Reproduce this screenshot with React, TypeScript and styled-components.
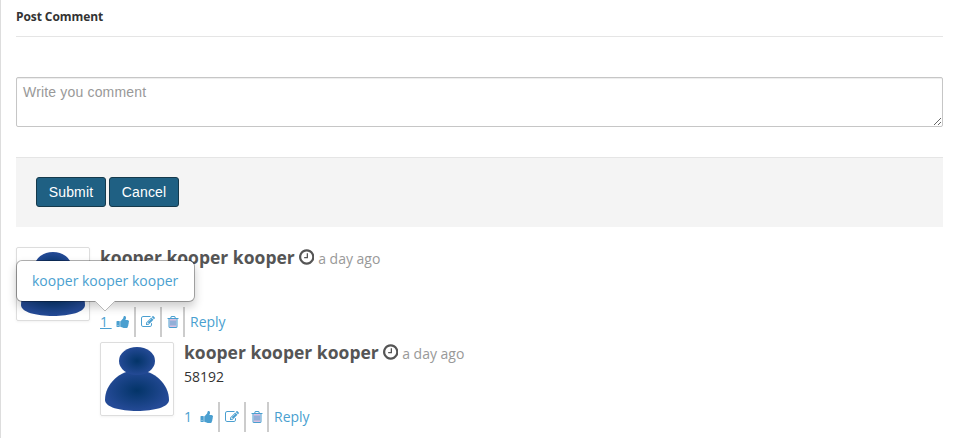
import React from "react";
import styled, { createGlobalStyle } from "styled-components";

const GlobalStyle = createGlobalStyle`
  * { box-sizing: border-box; }
  html, body { margin: 0; background: #fff; overflow: hidden; }
  body { font: 14px/20px "Open Sans", sans-serif; color: #333; }
`;

const Page = styled.main`
  height: 438px;
  padding: 0 12px 0 15px;
  border-left: 1px solid #ddd;
  overflow: hidden;
`;

const Legend = styled.h2`
  height: 37px;
  margin: 0 0 40px;
  padding-top: 7px;
  border-bottom: 1px solid #e5e5e5;
  font-size: 12px;
  line-height: 20px;
  font-weight: 700;
  letter-spacing: -0.08px;
`;

const CommentBox = styled.textarea`
  display: block;
  width: 100%;
  height: 50px;
  margin: 0 0 30px;
  padding: 4px 6px;
  border: 1px solid #c6c6c6;
  border-radius: 2px;
  box-shadow: inset 0 1px 1px rgba(0, 0, 0, 0.075);
  background: #fff;
  font: 14px/20px "Liberation Sans", Arial, sans-serif;
  letter-spacing: 0.17px;
  resize: vertical;
  overflow: auto;
  outline: 0;
  &::placeholder { color: #999; }
`;

const FormActions = styled.div`
  display: flex;
  gap: 3px;
  height: 70px;
  padding: 19px 20px;
  margin-bottom: 20px;
  border-top: 1px solid #e5e5e5;
  background: #f4f4f4;
`;

const Button = styled.button`
  width: 70px;
  height: 30px;
  padding: 0;
  border: 1px solid #15394b;
  border-radius: 3px;
  background: #1f6083;
  color: #fff;
  font: 14px/20px "Liberation Sans", Arial, sans-serif;
  letter-spacing: 0.12px;
`;

const CommentRow = styled.article<{ $nested?: boolean }>`
  display: flex;
  gap: 10px;
  height: 95px;
  margin-left: ${(p) => (p.$nested ? "84px" : "0")};
`;

const Avatar = styled.div`
  flex: none;
  width: 74px;
  height: 74px;
  padding: 4px;
  border: 1px solid #ddd;
  border-radius: 2px;
  box-shadow: 0 1px 3px rgba(0, 0, 0, 0.055);
  svg { display: block; }
`;

const CommentBody = styled.div`
  display: flex;
  flex-direction: column;
`;

const Heading = styled.h4`
  display: flex;
  align-items: baseline;
  height: 20px;
  margin: 0 0 5px;
  color: #555;
  font-size: 17.5px;
  line-height: 20px;
  font-weight: 700;
  white-space: pre;
  svg { margin: 1px 4px 0; align-self: flex-start; }
`;

const Time = styled.small`
  color: #999;
  font-size: 14px;
  font-weight: 400;
`;

const Message = styled.p`
  height: 20px;
  margin: 0 0 15px;
`;

const Actions = styled.div`
  display: flex;
  height: 30px;
  line-height: 30px;
  color: #4a9fd0;
`;

const Action = styled.span<{ $width: number; $pad?: number }>`
  display: flex;
  align-items: center;
  width: ${(p) => p.$width}px;
  padding-left: ${(p) => p.$pad ?? 5}px;
  border-right: 2px solid #ccc;
`;

const Count = styled.a<{ $underlined?: boolean }>`
  width: 16px;
  white-space: pre;
  color: #4a9fd0;
  text-decoration: ${(p) => (p.$underlined ? "underline" : "none")};
`;

const Reply = styled.a`
  padding-left: 5px;
  color: #4a9fd0;
`;

const PopoverAnchor = styled.div`
  position: relative;
  height: 0;
`;

const Popover = styled.div`
  position: absolute;
  z-index: 2;
  left: 0;
  top: 13px;
  width: 179px;
  height: 42px;
  padding: 10px 15px;
  border: 1px solid rgba(0, 0, 0, 0.3);
  background-clip: padding-box;
  border-radius: 6px;
  background-color: #fff;
  box-shadow: 0 5px 10px rgba(0, 0, 0, 0.2);
  color: #4a9fd0;
  white-space: nowrap;
`;

const PopoverArrow = styled.svg`
  position: absolute;
  left: 77px;
  top: 40px;
`;

const GLYPHS = {
  clock: {
    width: 1536,
    d: "M896 544v448q0 14-9 23t-23 9h-320q-14 0-23-9t-9-23v-64q0-14 9-23t23-9h224v-352q0-14 9-23t23-9h64q14 0 23 9t9 23zm416 352q0-148-73-273t-198-198-273-73-273 73-198 198-73 273 73 273 198 198 273 73 273-73 198-198 73-273zm224 0q0 209-103 385.5t-279.5 279.5-385.5 103-385.5-103-279.5-279.5-103-385.5 103-385.5 279.5-279.5 385.5-103 385.5 103 279.5 279.5 103 385.5z",
  },
  thumb: {
    width: 1792,
    d: "M320 1344q0-26-19-45t-45-19q-27 0-45.5 19t-18.5 45q0 27 18.5 45.5t45.5 18.5q26 0 45-18.5t19-45.5zm160-512v640q0 26-19 45t-45 19h-288q-26 0-45-19t-19-45v-640q0-26 19-45t45-19h288q26 0 45 19t19 45zm1184 0q0 86-55 149 15 44 15 76 3 76-43 137 17 56 0 117-15 57-54 94 9 112-49 181-64 76-197 78h-129q-66 0-144-15.5t-121.5-29-120.5-39.5q-123-43-158-44-26-1-45-19.5t-19-44.5v-641q0-25 18-43.5t43-20.5q24-2 76-59t101-121q68-87 101-120 18-18 31-48t17.5-48.5 13.5-60.5q7-39 12.5-61t19.5-52 34-50q19-19 45-19 46 0 82.5 10.5t60 26 40 40.5 24 45 12 50 5 45 .5 39q0 38-9.5 76t-19 60-27.5 56q-3 6-10 18t-11 22-8 24h277q78 0 135 57t57 135z",
  },
  edit: {
    width: 1792,
    d: "M888 1184l116-116-152-152-116 116v56h96v96h56zm440-720q-16-16-33 1l-350 350q-17 17-1 33t33-1l350-350q17-17 1-33zm80 594v190q0 119-84.5 203.5t-203.5 84.5h-832q-119 0-203.5-84.5t-84.5-203.5v-832q0-119 84.5-203.5t203.5-84.5h832q63 0 117 25 15 7 18 23 3 17-9 29l-49 49q-14 14-32 8-23-6-45-6h-832q-66 0-113 47t-47 113v832q0 66 47 113t113 47h832q66 0 113-47t47-113v-126q0-13 9-22l64-64q15-15 35-7t20 29zm-96-738l288 288-672 672h-288v-288zm444 132l-92 92-288-288 92-92q28-28 68-28t68 28l152 152q28 28 28 68t-28 68z",
  },
  trash: {
    width: 1792,
    d: "M704 736v576q0 14-9 23t-23 9h-64q-14 0-23-9t-9-23v-576q0-14 9-23t23-9h64q14 0 23 9t9 23zm256 0v576q0 14-9 23t-23 9h-64q-14 0-23-9t-9-23v-576q0-14 9-23t23-9h64q14 0 23 9t9 23zm256 0v576q0 14-9 23t-23 9h-64q-14 0-23-9t-9-23v-576q0-14 9-23t23-9h64q14 0 23 9t9 23zm128 724v-948h-896v948q0 22 7 40.5t14.5 27 10.5 8.5h832q3 0 10.5-8.5t14.5-27 7-40.5zm-672-1076h448l-48-117q-7-9-17-11h-317q-10 2-17 11zm928 32v64q0 14-9 23t-23 9h-96v948q0 83-47 143.5t-113 60.5h-832q-66 0-113-58.5t-47-141.5v-952h-96q-14 0-23-9t-9-23v-64q0-14 9-23t23-9h309l70-167q15-37 54-63t79-26h320q40 0 79 26t54 63l70 167h309q14 0 23 9t9 23z",
  },
};

function Glyph({ name, size = 14 }: { name: keyof typeof GLYPHS; size?: number }) {
  const { width, d } = GLYPHS[name];
  return (
    <svg width={(size * width) / 1792} height={size} viewBox={`0 0 ${width} 1792`} fill="currentColor">
      {name === "trash" && <path d="M448 512h896v1024H448z" fill="#d9bfe0" />}
      <path d={d} />
    </svg>
  );
}

function Person({ id }: { id: string }) {
  return (
    <svg width="64" height="64" viewBox="0 0 64 64">
      <defs>
        <radialGradient id={id}>
          <stop offset="0" stopColor="#033468" />
          <stop offset="1" stopColor="#244a96" />
        </radialGradient>
      </defs>
      <path d="M0 53C0 37 15 23 32 23s32 14 32 30c0 7-15 11-32 11S0 60 0 53z" fill={`url(#${id})`} />
      <ellipse cx="32" cy="14" rx="18" ry="14" fill={`url(#${id})`} />
    </svg>
  );
}

interface CommentProps {
  id: string;
  text?: string;
  nested?: boolean;
  underlined?: boolean;
}

function Comment({ id, text, nested, underlined }: CommentProps) {
  return (
    <CommentRow $nested={nested}>
      <Avatar><Person id={id} /></Avatar>
      <CommentBody>
        <Heading>
          kooper kooper kooper<Glyph name="clock" size={18} /><Time>a day ago</Time>
        </Heading>
        <Message>{text}</Message>
        <Actions>
          <Action $width={36} $pad={0}>
            <Count $underlined={underlined}>{"1 "}</Count>
            <Glyph name="thumb" />
          </Action>
          <Action $width={26}><Glyph name="edit" /></Action>
          <Action $width={23} $pad={4}><Glyph name="trash" /></Action>
          <Reply>Reply</Reply>
        </Actions>
      </CommentBody>
    </CommentRow>
  );
}

export default function App() {
  return (
    <>
      <GlobalStyle />
      <Page>
        <Legend>Post Comment</Legend>
        <CommentBox placeholder="Write you comment" />
        <FormActions>
          <Button>Submit</Button>
          <Button>Cancel</Button>
        </FormActions>
        <PopoverAnchor>
          <Popover>
            kooper kooper kooper
            <PopoverArrow width="22" height="12" viewBox="0 0 22 12">
              <path d="M1 0L11 10L21 0" fill="#fff" stroke="#b8b8b8" />
            </PopoverArrow>
          </Popover>
        </PopoverAnchor>
        <Comment id="person-a" underlined />
        <Comment id="person-b" text="58192" nested />
      </Page>
    </>
  );
}
